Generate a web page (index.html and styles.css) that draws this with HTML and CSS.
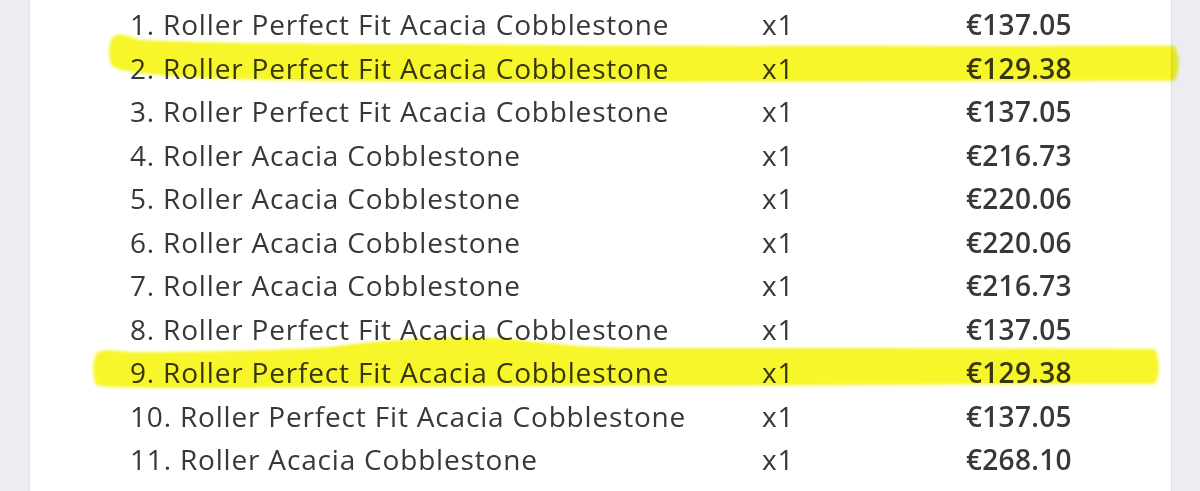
FILE: index.html
```html
<!DOCTYPE html>
<html lang="en">
<head>
<meta charset="utf-8">
<title>Order items</title>
<link rel="stylesheet" href="styles.css">
</head>
<body>
<div class="page">
  <div class="card">
    <ul class="items">
      <li class="item"><span class="name">1. Roller Perfect Fit Acacia Cobblestone</span><span class="qty">x1</span><span class="price">€137.05</span></li>
      <li class="item"><span class="name">2. Roller Perfect Fit Acacia Cobblestone</span><span class="qty">x1</span><span class="price">€129.38</span></li>
      <li class="item"><span class="name">3. Roller Perfect Fit Acacia Cobblestone</span><span class="qty">x1</span><span class="price">€137.05</span></li>
      <li class="item"><span class="name">4. Roller Acacia Cobblestone</span><span class="qty">x1</span><span class="price">€216.73</span></li>
      <li class="item"><span class="name">5. Roller Acacia Cobblestone</span><span class="qty">x1</span><span class="price">€220.06</span></li>
      <li class="item"><span class="name">6. Roller Acacia Cobblestone</span><span class="qty">x1</span><span class="price">€220.06</span></li>
      <li class="item"><span class="name">7. Roller Acacia Cobblestone</span><span class="qty">x1</span><span class="price">€216.73</span></li>
      <li class="item"><span class="name">8. Roller Perfect Fit Acacia Cobblestone</span><span class="qty">x1</span><span class="price">€137.05</span></li>
      <li class="item"><span class="name">9. Roller Perfect Fit Acacia Cobblestone</span><span class="qty">x1</span><span class="price">€129.38</span></li>
      <li class="item"><span class="name">10. Roller Perfect Fit Acacia Cobblestone</span><span class="qty">x1</span><span class="price">€137.05</span></li>
      <li class="item"><span class="name">11. Roller Acacia Cobblestone</span><span class="qty">x1</span><span class="price">€268.10</span></li>
    </ul>
  </div>
  <svg class="marks" width="1200" height="491" viewBox="0 0 1200 491" aria-hidden="true">
    <defs>
      <filter id="soft" x="-5%" y="-50%" width="110%" height="200%">
        <feGaussianBlur stdDeviation="1.4"/>
      </filter>
    </defs>
    <path class="mark" filter="url(#soft)" d="M112 38 C118 32 124 34 140 40 C220 44 360 44 440 44 C600 46 800 46 1000 46 C1100 46 1160 45 1174 46 C1180 54 1180 72 1174 81 C1000 81 800 82 600 82 C450 83 300 82 200 78 C150 75 120 72 112 66 C108 56 108 46 112 38 Z"/>
    <path class="mark" filter="url(#soft)" d="M96 354 C100 349 110 350 130 352 C200 352 280 350 330 347 C380 340 440 336 500 338 C540 342 580 348 640 348 C800 348 1000 348 1155 349 C1160 358 1160 376 1155 384 C1000 384 800 386 600 386 C450 387 300 388 200 388 C140 388 105 388 96 385 C92 375 92 362 96 354 Z"/>
  </svg>
</div>
</body>
</html>
```

FILE: styles.css
```css
html, body {
  margin: 0;
  padding: 0;
}

body {
  background: #ececf1;
  font-family: "Open Sans", "Noto Sans", sans-serif;
  color: #38383a;
}

.page {
  position: relative;
  width: 1200px;
  height: 491px;
  overflow: hidden;
}

.card {
  margin: 0 29px 0 30px;
  height: 100%;
  background: #ffffff;
  box-shadow: -1px 0 0 #e2e2e8, 1px 0 0 #dedee4;
}

.items {
  list-style: none;
  margin: 0;
  padding: 3px 0 0 100px;
}

.item {
  display: grid;
  grid-template-columns: 632px 204px auto;
  height: 43.5px;
  line-height: 43.5px;
  font-size: 28px;
  letter-spacing: 0.82px;
  white-space: nowrap;
}

.price {
  font-weight: 600;
  letter-spacing: 0.3px;
}

.marks {
  position: absolute;
  left: 0;
  top: 0;
  pointer-events: none;
  mix-blend-mode: multiply;
}

.mark {
  fill: #f6f62a;
}
```
